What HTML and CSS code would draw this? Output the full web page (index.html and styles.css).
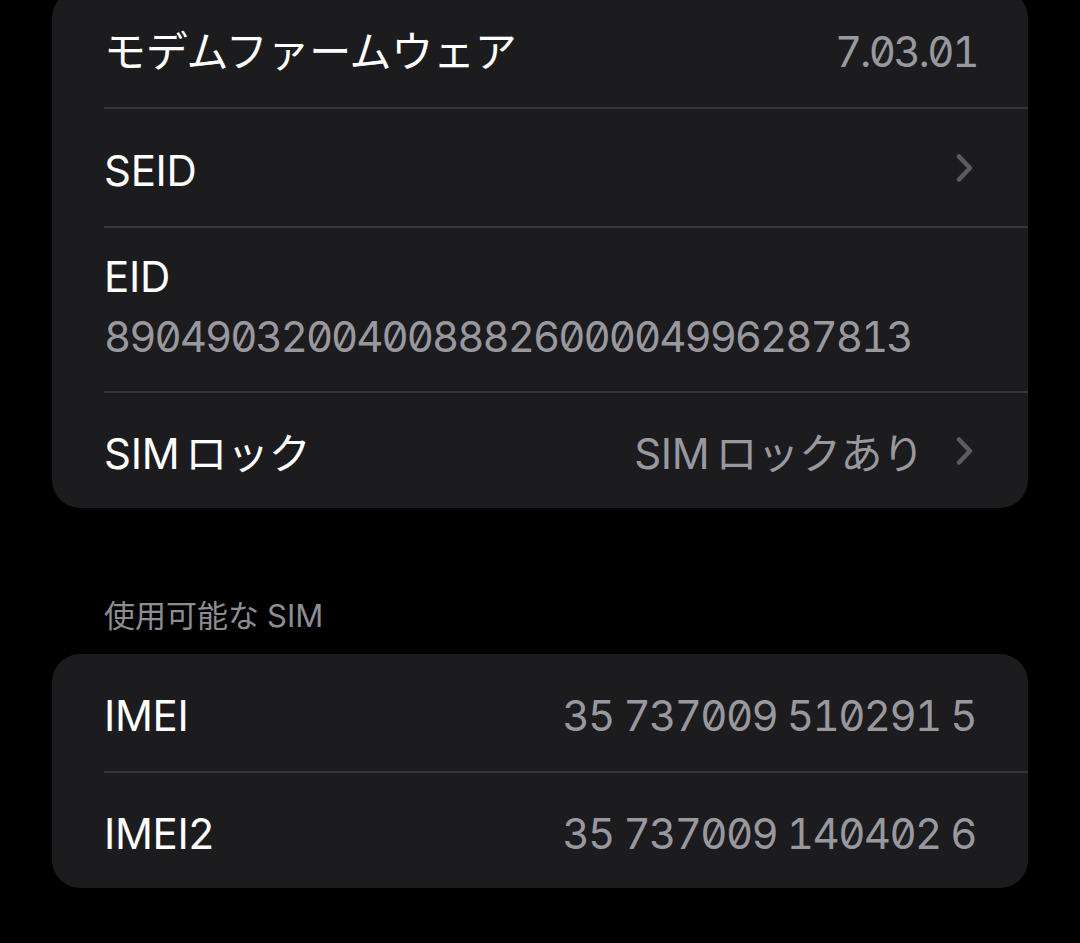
FILE: index.html
```html
<!DOCTYPE html>
<html lang="ja">
<head>
<meta charset="utf-8">
<title>情報</title>
<link rel="stylesheet" href="styles.css">
</head>
<body>
<main class="page">
  <section class="card card-top">
    <div class="row">
      <div class="row-inner h119">
        <span class="label">モデムファームウェア</span>
        <span class="value mono fw">7.03.01</span>
      </div>
    </div>
    <div class="row">
      <div class="row-inner h119">
        <span class="label">SEID</span>
        <span class="chev"><svg viewBox="0 0 18 30" width="18" height="30"><path d="M4 3.5 L15 15 L4 26.5" fill="none" stroke="#5b5b60" stroke-width="4.5" stroke-linecap="round" stroke-linejoin="round"/></svg></span>
      </div>
    </div>
    <div class="row">
      <div class="row-inner stack h165">
        <span class="label">EID</span>
        <span class="eid">89049032004008882600004996287813</span>
      </div>
    </div>
    <div class="row">
      <div class="row-inner last h115">
        <span class="label"><span class="latin">SIM</span>ロック</span>
        <span class="value"><span class="latin">SIM</span>ロックあり</span>
        <span class="chev with-value"><svg viewBox="0 0 18 30" width="18" height="30"><path d="M4 3.5 L15 15 L4 26.5" fill="none" stroke="#5b5b60" stroke-width="4.5" stroke-linecap="round" stroke-linejoin="round"/></svg></span>
      </div>
    </div>
  </section>

  <h2 class="section-header">使用可能な<span class="latin-sm">SIM</span></h2>

  <section class="card">
    <div class="row">
      <div class="row-inner h119">
        <span class="label">IMEI</span>
        <span class="value mono imei">35 737009 510291 5</span>
      </div>
    </div>
    <div class="row">
      <div class="row-inner last h115">
        <span class="label">IMEI2</span>
        <span class="value mono imei">35 737009 140402 6</span>
      </div>
    </div>
  </section>
</main>
</body>
</html>
```

FILE: styles.css
```css
html, body {
  margin: 0;
  padding: 0;
  background: #000;
}

body {
  font-family: Inter, "Noto Sans CJK JP", sans-serif;
  color: #fff;
  -webkit-font-smoothing: antialiased;
}

.page {
  padding: 0 52px;
  margin-top: -10px;
}

.card {
  background: #1c1c1e;
  border-radius: 28px;
  overflow: hidden;
}

.row {
  padding-left: 52px;
}

.row-inner {
  display: flex;
  align-items: center;
  box-sizing: border-box;
  border-bottom: 2px solid #38383a;
  padding-right: 53px;
  padding-top: 7px;
}

.row-inner.last {
  border-bottom: none;
}

.h119 { height: 119px; }
.h165 { height: 165px; }
.h115 { height: 115px; }

.row-inner.stack {
  flex-direction: column;
  align-items: flex-start;
  justify-content: flex-start;
  padding-top: 24px;
  gap: 10px;
}

.label {
  flex: 1;
  font-size: 42px;
  line-height: 50px;
  letter-spacing: -0.3px;
  white-space: nowrap;
}

.stack .label {
  flex: none;
}

.latin {
  margin-right: 6px;
}

.value {
  font-size: 42px;
  line-height: 50px;
  color: #98989e;
  white-space: nowrap;
  letter-spacing: -0.3px;
}

.mono {
  font-feature-settings: "tnum" 1, "zero" 1;
}

.imei {
  letter-spacing: -1.6px;
  margin-right: -1px;
}

.fw {
  letter-spacing: -2.4px;
  margin-right: -2px;
}

.eid {
  font-size: 42px;
  line-height: 50px;
  color: #98989e;
  font-feature-settings: "tnum" 1, "zero" 1;
  letter-spacing: -2px;
  white-space: nowrap;
}

.chev {
  display: flex;
  margin-right: 2px;
  margin-top: -6px;
}

.chev.with-value {
  margin-left: 31px;
}

.section-header {
  margin: 90px 0 20px 52px;
  height: 36px;
  font-size: 31px;
  line-height: 36px;
  font-weight: 400;
  color: #8d8d93;
  letter-spacing: 0;
}

.latin-sm {
  margin-left: 8px;
}
```
